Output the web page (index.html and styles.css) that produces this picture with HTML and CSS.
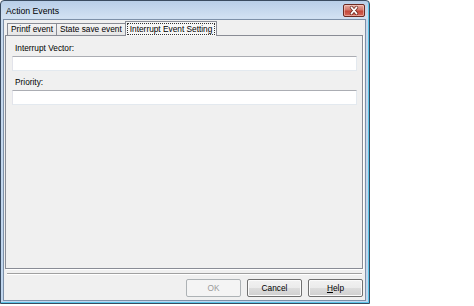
FILE: index.html
```html
<!DOCTYPE html>
<html lang="en">
<head>
    <meta charset="UTF-8">
    <title>Action Events</title>
    <link rel="stylesheet" href="styles.css">
</head>
<body>
    <div class="window">
        <div class="titlebar">
            <span class="title">Action Events</span>
            <div class="close">
                <svg width="20" height="11" viewBox="0 0 20 11">
                    <path d="M7.5 2.5 L12.5 8.5 M12.5 2.5 L7.5 8.5" stroke="#4a1810" stroke-width="3.4" stroke-linecap="round" opacity="0.7"/>
                    <path d="M7.5 2.5 L12.5 8.5 M12.5 2.5 L7.5 8.5" stroke="#fff" stroke-width="1.8" stroke-linecap="round"/>
                </svg>
            </div>
        </div>
        <div class="client">
            <div class="tabs">
                <div class="tab">Printf event</div>
                <div class="tab">State save event</div>
                <div class="tab active"><span class="focus">Interrupt Event Setting</span></div>
            </div>
            <div class="panel">
                <div class="field-label">Interrupt Vector:</div>
                <div class="textbox"></div>
                <div class="field-label">Priority:</div>
                <div class="textbox"></div>
            </div>
            <div class="separator"></div>
            <div class="buttons">
                <button class="button" disabled>OK</button>
                <button class="button">Cancel</button>
                <button class="button"><u>H</u>elp</button>
            </div>
        </div>
    </div>
</body>
</html>
```

FILE: styles.css
```css
body {
    margin: 0;
    background: #fff;
    font-family: "Liberation Sans", Arial, sans-serif;
    font-size: 8.3px;
    color: #000;
}

.window {
    width: 370px;
    height: 304px;
    box-sizing: border-box;
    display: flex;
    flex-direction: column;
    padding: 0 3px 2px 2px;
    border: 1px solid #3a4b60;
    border-radius: 4px 4px 0 0;
    background: linear-gradient(#b8cee8, #d2e1f2 17px, #c6d9ee 19px, #c0d6ee);
    box-shadow: inset -1px -1px 0 #5cc6ea;
}

.titlebar {
    height: 18px;
    display: flex;
    align-items: center;
    justify-content: space-between;
    padding-left: 3px;
}

.title {
    font-size: 8.7px;
    padding-top: 2px;
}

.close {
    width: 22px;
    height: 13px;
    box-sizing: border-box;
    margin-right: 1px;
    border: 1px solid #6b2a22;
    border-radius: 2px;
    background: linear-gradient(#e5aba1, #d3766a 45%, #c4483a 55%, #d4685a);
    box-shadow: inset 0 0 0 1px rgba(255, 220, 210, 0.5);
}

.close svg {
    display: block;
}

.client {
    flex: 1;
    display: flex;
    flex-direction: column;
    border: 1px solid #7d90a8;
    background: #f0f0f0;
    padding-bottom: 3px;
}

.tabs {
    display: flex;
    align-items: flex-end;
    height: 14px;
    margin-top: 1px;
    padding-left: 3px;
    position: relative;
    z-index: 1;
}

.tab {
    height: 12px;
    box-sizing: border-box;
    padding: 0 3px;
    line-height: 11px;
    border: 1px solid #898c95;
    border-right: none;
    border-bottom: none;
    background: linear-gradient(#f4f4f4, #e6e6e6);
    white-space: nowrap;
}

.tab.active {
    height: 15px;
    margin-bottom: -1px;
    padding: 1px 1px 0;
    border-right: 1px solid #898c95;
    background: #f7f7f7;
}

.focus {
    display: block;
    padding: 0 2px;
    line-height: 10px;
    border: 1px dotted #333;
}

.panel {
    flex: 1;
    display: flex;
    flex-direction: column;
    margin: 0 2px 0 1px;
    padding: 7px 5px 0 6px;
    border: 1px solid #898c95;
    background: #f0f0f0;
    box-shadow: 1px 1px 0 #fff;
}

.field-label {
    line-height: 10px;
    padding-left: 3px;
    margin-bottom: 3px;
}

.textbox {
    height: 15px;
    box-sizing: border-box;
    margin-bottom: 6px;
    border: 1px solid #e3e9ef;
    border-top-color: #abadb3;
    border-left-color: #e2e3ea;
    background: #fff;
}

.separator {
    height: 2px;
    box-sizing: border-box;
    margin: 4px 3px 0 3px;
    border-top: 1px solid #a0a0a0;
    border-bottom: 1px solid #fff;
}

.buttons {
    display: flex;
    justify-content: flex-end;
    gap: 6px;
    margin-top: 4px;
    padding-right: 2px;
}

.button {
    width: 55px;
    height: 18px;
    padding: 0;
    font-family: inherit;
    font-size: 8.3px;
    color: #000;
    border: 1px solid #707070;
    border-radius: 2px;
    background: linear-gradient(#f2f2f2, #ebebeb 50%, #dddddd 50%, #cfcfcf);
    box-shadow: inset 0 0 0 1px #fbfbfb;
}

.button:disabled {
    color: #9a9a9a;
    border-color: #adb2b5;
    background: #f4f4f4;
    box-shadow: none;
}
```
